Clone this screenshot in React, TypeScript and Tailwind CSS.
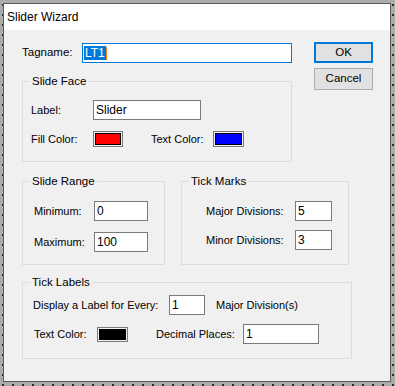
import React from 'react';

const font = { fontFamily: '"Liberation Sans", Arial, sans-serif' };

interface GroupBoxProps {
  title: string;
  className: string;
  children: React.ReactNode;
}

const GroupBox: React.FC<GroupBoxProps> = ({ title, className, children }) => (
  <div className={`relative border border-[#dcdcdc] ${className}`}>
    <span className="absolute -top-[8px] left-[7px] bg-[#f0f0f0] px-[2px] text-[11.5px] leading-[14px]">
      {title}
    </span>
    {children}
  </div>
);

const TextBox: React.FC<{ value: string; className: string }> = ({ value, className }) => (
  <div className={`flex h-[20px] items-center border border-[#7a7a7a] bg-white pl-[2px] text-[12px] ${className}`}>
    {value}
  </div>
);

const Swatch: React.FC<{ color: string; className: string }> = ({ color, className }) => (
  <div className={`border border-[#7a7a7a] p-[1px] ${className}`}>
    <div className={`h-full w-full border border-black ${color}`} />
  </div>
);

const App: React.FC = () => {
  return (
    <div
      className="h-[386px] w-[395px] overflow-hidden bg-[#ababab] bg-[radial-gradient(#2a2a2a_0.8px,transparent_1px)] bg-[length:10px_10px] bg-[position:-2px_0px] pl-[3px] pt-[3px] text-black"
      style={font}
    >
      <div className="flex h-[379px] w-[388px] flex-col border border-[#5a5a5a] bg-[#f0f0f0]">
        {/* title bar */}
        <div className="flex h-[26px] items-center bg-white pl-[3px] text-[12px]">Slider Wizard</div>

        <div className="pl-[18px] pt-[12px] text-[11px]">
          <div className="flex">
            <div className="mt-[1px] w-[270px]">
              <div className="flex h-[20px] items-center">
                <span className="w-[60px] text-[11.5px]">Tagname:</span>
                <div className="flex h-[20px] w-[210px] items-center border border-[#0078d7] bg-white pl-[1px] text-[12px]">
                  <span className="flex h-[14px] items-center bg-[#0078d7] px-[1px] text-white">LT1</span>
                  <span className="h-[13px] w-[1px] bg-[#e8801c]" />
                </div>
              </div>

              <GroupBox title="Slide Face" className="mt-[18px] h-[81px] w-[270px] pl-[8px] pt-[18px]">
                <div className="flex h-[20px] items-center">
                  <span className="w-[62px]">Label:</span>
                  <TextBox value="Slider" className="w-[108px]" />
                </div>
                <div className="mt-[11px] flex h-[16px] items-center">
                  <span className="w-[62px]">Fill Color:</span>
                  <Swatch color="bg-[#ff0000]" className="h-[16px] w-[30px]" />
                  <span className="ml-[28px] w-[62px]">Text Color:</span>
                  <Swatch color="bg-[#0000ff]" className="h-[16px] w-[31px]" />
                </div>
              </GroupBox>
            </div>

            <div className="ml-[22px] flex flex-col">
              <button className="h-[21px] w-[59px] border-2 border-[#0078d7] bg-[#e1e1e1] text-[11.5px]">OK</button>
              <button className="mt-[5px] h-[22px] w-[59px] border border-[#adadad] bg-[#e1e1e1] text-[11.5px]">
                Cancel
              </button>
            </div>
          </div>

          <div className="mt-[19px] flex">
            <GroupBox title="Slide Range" className="h-[84px] w-[143px] pl-[11px] pt-[19px]">
              <div className="flex h-[20px] items-center">
                <span className="w-[60px]">Minimum:</span>
                <TextBox value="0" className="w-[54px]" />
              </div>
              <div className="mt-[11px] flex h-[20px] items-center">
                <span className="w-[60px]">Maximum:</span>
                <TextBox value="100" className="w-[54px]" />
              </div>
            </GroupBox>

            <GroupBox title="Tick Marks" className="ml-[16px] h-[84px] w-[168px] pl-[24px] pt-[19px]">
              <div className="flex h-[20px] items-center">
                <span className="w-[89px]">Major Divisions:</span>
                <TextBox value="5" className="w-[37px]" />
              </div>
              <div className="mt-[9px] flex h-[20px] items-center">
                <span className="w-[89px]">Minor Divisions:</span>
                <TextBox value="3" className="w-[37px]" />
              </div>
            </GroupBox>
          </div>

          <GroupBox title="Tick Labels" className="mt-[17px] h-[77px] w-[330px] pl-[10px] pt-[12px]">
            <div className="flex h-[20px] items-center">
              <span className="w-[136px]">Display a Label for Every:</span>
              <TextBox value="1" className="w-[36px]" />
              <span className="ml-[11px]">Major Division(s)</span>
            </div>
            <div className="mt-[9px] flex h-[20px] items-center pl-[1px]">
              <span className="w-[63px]">Text Color:</span>
              <Swatch color="bg-black" className="h-[15px] w-[31px]" />
              <span className="ml-[28px] w-[87px]">Decimal Places:</span>
              <TextBox value="1" className="w-[76px]" />
            </div>
          </GroupBox>
        </div>
      </div>
    </div>
  );
};

export default App;
